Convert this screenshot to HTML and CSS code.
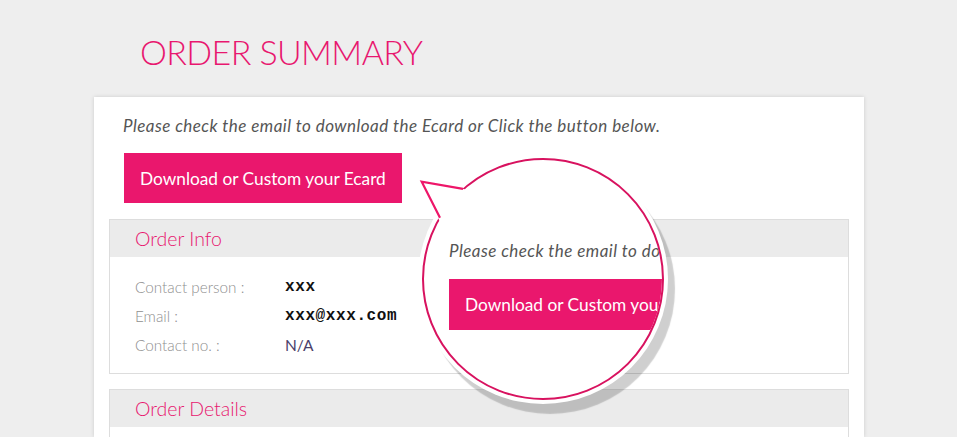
FILE: index.html
```html
<!DOCTYPE html>
<html>
<head>
<meta charset="utf-8">
<link rel="stylesheet" href="styles.css">
</head>
<body>
<div class="page">
  <h1 class="title">ORDER SUMMARY</h1>
  <div class="card">
    <div class="intro">
      <p class="note">Please check the email to download the Ecard or Click the button below.</p>
      <a class="btn">Download or Custom your Ecard</a>
    </div>
    <div class="panel">
      <div class="panel-head">Order Info</div>
      <div class="panel-body">
        <div class="row"><span class="label">Contact person :</span><span class="val mono">xxx</span></div>
        <div class="row"><span class="label">Email :</span><span class="val mono">xxx@xxx.com</span></div>
        <div class="row"><span class="label">Contact no. :</span><span class="val plain">N/A</span></div>
      </div>
    </div>
    <div class="panel panel-details">
      <div class="panel-head">Order Details</div>
      <div class="panel-body"></div>
    </div>
  </div>

  <div class="bubble">
    <div class="bubble-inner">
      <p class="note">Please check the email to do</p>
      <a class="btn">Download or Custom your</a>
    </div>
  </div>
  <svg class="tail" width="70" height="60" viewBox="410 170 70 60">
    <polygon points="421.7,181.7 466,189.5 440,222" fill="#fff"/>
    <polyline points="463,188.8 421.7,181.7 440,217.7" fill="none" stroke="#ee1669" stroke-width="2.2" stroke-linejoin="miter"/>
  </svg>
</div>
</body>
</html>
```
FILE: styles.css
```css
* { box-sizing: border-box; }
html, body { margin: 0; padding: 0; }
body {
  background: #eeeeee;
  font-family: Lato, "Open Sans", "Liberation Sans", sans-serif;
  height: 437px;
  overflow: hidden;
}
.page {
  position: relative;
  width: 770px;
  margin-left: 94px;
}
.title {
  margin: 0;
  padding: 31px 0 0 46px;
  height: 97px;
  font-size: 34px;
  line-height: 42px;
  font-weight: 300;
  color: #e8176f;
  letter-spacing: -0.6px;
}
.card {
  background: #fff;
  box-shadow: 0 0 4px rgba(0,0,0,0.14);
  padding: 15px 15px 0;
  height: 340px;
  overflow: hidden;
}
.intro {
  padding: 4px 14px 0;
}
.note {
  margin: 0;
  font-style: italic;
  font-size: 17px;
  letter-spacing: 0.45px;
  line-height: 20px;
  color: #555;
  white-space: nowrap;
}
.btn {
  display: inline-flex;
  align-items: center;
  margin-top: 17px;
  height: 50px;
  width: 278px;
  padding-left: 16px;
  background: #ea176d;
  color: #fff;
  font-size: 17.3px;
  white-space: nowrap;
  margin-left: 1px;
}
.panel {
  margin-top: 16px;
  border: 1px solid #dddddd;
}
.panel-head {
  height: 37px;
  background: #ebebeb;
  color: #e8176f;
  font-size: 19.5px;
  line-height: 37px;
  padding-left: 25px;
  font-weight: 300;
}
.panel-body {
  padding: 15px 25px 14px;
}
.row {
  display: flex;
  height: 29px;
  align-items: center;
}
.label {
  width: 150px;
  font-size: 15.3px;
  color: #8f8f8f;
  font-weight: 300;
}
.val { font-size: 15.5px; }
.mono {
  font-family: "Liberation Mono", "DejaVu Sans Mono", monospace;
  font-weight: bold;
  font-size: 16px;
  color: #111;
  letter-spacing: 0.6px;
}
.plain {
  color: #4b3f6b;
}
.panel-details { margin-top: 15px; }
.panel-details .panel-body { height: 30px; }

.bubble {
  position: absolute;
  left: 328px;
  top: 158px;
  width: 242px;
  height: 242px;
  border-radius: 50%;
  border: 2px solid #d8125f;
  background: #fff;
  box-shadow: 0 0 0 4px #fff, 7px 10px 1px 4px rgba(0,0,0,0.19);
}
.bubble-inner {
  width: 100%;
  height: 100%;
  border-radius: 50%;
  overflow: hidden;
  padding: 81px 0 0 25px;
}
.bubble-inner .btn {
  margin-left: 0;
  margin-top: 18px;
  height: 51px;
  width: 300px;
}
.tail {
  position: absolute;
  left: 316px;
  top: 170px;
}
```
